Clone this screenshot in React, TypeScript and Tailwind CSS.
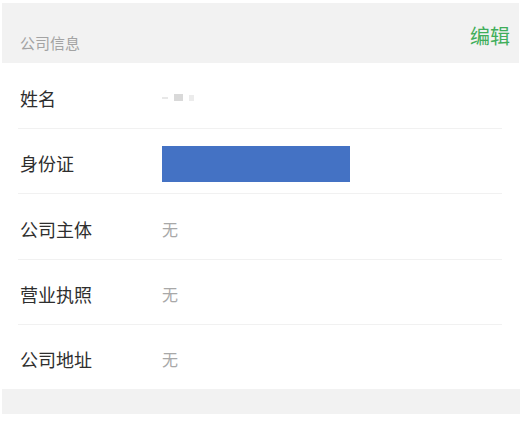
import React from "react";

const rows: { label: string; value: "name" | "id" | "none"; h: string }[] = [
  { label: "姓名", value: "name", h: "h-[66px]" },
  { label: "身份证", value: "id", h: "h-[65px]" },
  { label: "公司主体", value: "none", h: "h-[66px]" },
  { label: "营业执照", value: "none", h: "h-[65px]" },
  { label: "公司地址", value: "none", h: "h-[64px]" },
];

export default function App() {
  return (
    <div
      className="w-[523px] h-[427px] bg-white pt-[3px] overflow-hidden"
      style={{ fontFamily: '"Noto Sans CJK SC", "Noto Sans", sans-serif' }}
    >
      <div className="ml-[2px] mr-[4px] h-[60px] bg-[#f2f2f2] flex items-start justify-between">
        <span className="ml-[18px] mt-[30px] text-[15px] leading-[20px] text-[#a3a3a3]">公司信息</span>
        <span className="mr-[9px] mt-[20px] text-[20px] leading-[26px] text-[#3fae5a]">编辑</span>
      </div>
      <div className="flex flex-col">
        {rows.map((r, i) => (
          <div
            key={r.label}
            className={`mx-[18px] mr-[21px] ${r.h} flex items-center pt-[4px] ${
              i < rows.length - 1 ? "border-b border-[#f1f1f1]" : ""
            }`}
          >
            <span className="pl-[2px] w-[144px] text-[18px] leading-[24px] text-[#2e2e2e]">{r.label}</span>
            {r.value === "none" && (
              <span className="text-[16px] leading-[22px] text-[#a8a8a8]">无</span>
            )}
            {r.value === "id" && <div className="w-[188px] h-[36px] bg-[#4472c4] mt-[2px]" />}
            {r.value === "name" && (
              <div className="flex items-center gap-[6px] h-[14px]">
                <div className="w-[6px] h-[2px] bg-[#e8e8e8]" />
                <div className="w-[9px] h-[7px] bg-[#d9d9d9]" />
                <div className="w-[5px] h-[6px] bg-[#ececec]" />
              </div>
            )}
          </div>
        ))}
      </div>
      <div className="ml-[2px] mr-[3px] h-[25px] bg-[#f2f2f2]" />
    </div>
  );
}
